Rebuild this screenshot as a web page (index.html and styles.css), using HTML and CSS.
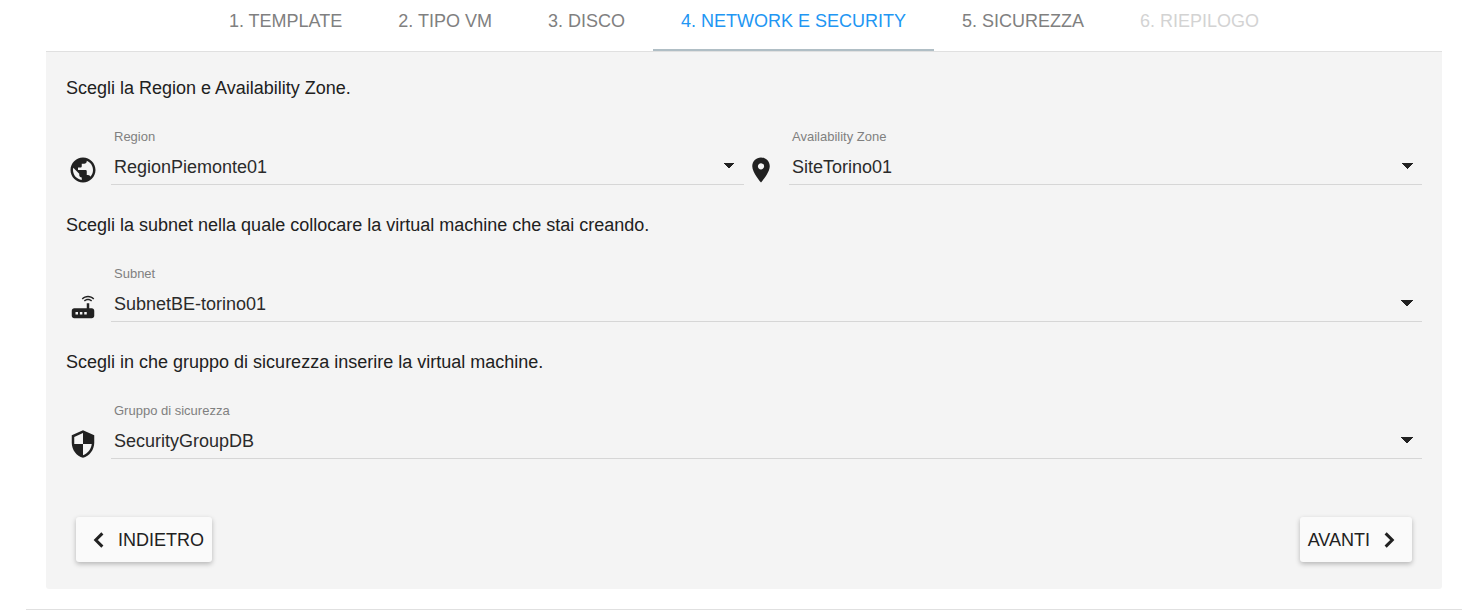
FILE: index.html
```
<!DOCTYPE html>
<html lang="it">
<head>
<meta charset="utf-8">
<meta name="viewport" content="width=device-width, initial-scale=1">
<title>Creazione virtual machine</title>
<link rel="stylesheet" href="styles.css">
</head>
<body>
<main class="wizard">
  <nav class="tabs" aria-label="Passi">
    <button class="tab" type="button">1. TEMPLATE</button>
    <button class="tab" type="button">2. TIPO VM</button>
    <button class="tab" type="button">3. DISCO</button>
    <button class="tab tab-active" type="button" aria-current="step">4. NETWORK E SECURITY</button>
    <button class="tab" type="button">5. SICUREZZA</button>
    <button class="tab" type="button" disabled>6. RIEPILOGO</button>
  </nav>
  <form class="panel">
    <p class="prompt">Scegli la Region e Availability Zone.</p>
    <div class="row">
      <div class="field">
        <svg class="icon" viewBox="0 0 24 24" aria-hidden="true"><path d="M12 2C6.480 2 2 6.480 2 12s4.480 10 10 10 10-4.480 10-10S17.520 2 12 2zm-1 17.930c-3.950-.490-7-3.850-7-7.930 0-.620.080-1.210.210-1.790L9 15v1c0 1.100.900 2 2 2v1.930zm6.900-2.540c-.260-.810-1-1.390-1.900-1.390h-1v-3c0-.550-.450-1-1-1H8v-2h2c.550 0 1-.450 1-1V7h2c1.100 0 2-.900 2-2v-.410c2.930 1.190 5 4.060 5 7.410 0 2.080-.800 3.970-2.100 5.390z"/></svg>
        <div class="control">
          <label class="label" for="region">Region</label>
          <select class="select" id="region"><option>RegionPiemonte01</option></select>
        </div>
      </div>
      <div class="field">
        <svg class="icon" viewBox="0 0 24 24" aria-hidden="true"><path d="M12 2C8.130 2 5 5.130 5 9c0 5.250 7 13 7 13s7-7.750 7-13c0-3.870-3.130-7-7-7zm0 9.500c-1.380 0-2.500-1.120-2.500-2.500s1.120-2.500 2.500-2.500 2.500 1.120 2.500 2.500-1.120 2.500-2.500 2.500z"/></svg>
        <div class="control">
          <label class="label" for="zone">Availability Zone</label>
          <select class="select" id="zone"><option>SiteTorino01</option></select>
        </div>
      </div>
    </div>
    <p class="prompt">Scegli la subnet nella quale collocare la virtual machine che stai creando.</p>
    <div class="row">
      <div class="field">
        <svg class="icon" viewBox="0 0 24 24" aria-hidden="true"><path d="M20.200 5.900l.800-.800C19.600 3.700 17.800 3 16 3s-3.600.700-5 2.100l.800.800C13 4.800 14.500 4.200 16 4.200s3 .600 4.200 1.700zm-.900.800c-.900-.900-2.100-1.400-3.300-1.400s-2.400.500-3.300 1.400l.800.800c.700-.700 1.600-1 2.500-1 .900 0 1.800.300 2.500 1l.800-.800zM19 13h-2V9h-2v4H5c-1.100 0-2 .900-2 2v4c0 1.100.900 2 2 2h14c1.100 0 2-.900 2-2v-4c0-1.100-.900-2-2-2zM8 18H6v-2h2v2zm3.500 0h-2v-2h2v2zm3.500 0h-2v-2h2v2z"/></svg>
        <div class="control">
          <label class="label" for="subnet">Subnet</label>
          <select class="select" id="subnet"><option>SubnetBE-torino01</option></select>
        </div>
      </div>
    </div>
    <p class="prompt">Scegli in che gruppo di sicurezza inserire la virtual machine.</p>
    <div class="row">
      <div class="field">
        <svg class="icon" viewBox="0 0 24 24" aria-hidden="true"><path d="M12 1L3 5v6c0 5.550 3.840 10.740 9 12 5.160-1.260 9-6.450 9-12V5l-9-4zm0 10.990h7c-.530 4.120-3.280 7.790-7 8.940V12H5V6.300l7-3.110v8.800z"/></svg>
        <div class="control">
          <label class="label" for="group">Gruppo di sicurezza</label>
          <select class="select" id="group"><option>SecurityGroupDB</option></select>
        </div>
      </div>
    </div>
    <div class="actions">
      <button class="button" type="button">
        <svg class="icon chevron" viewBox="0 0 24 24" aria-hidden="true"><path d="M14.700 6.700L9.400 12l5.300 5.300"/></svg>
        INDIETRO
      </button>
      <button class="button" type="button">
        AVANTI
        <svg class="icon chevron" viewBox="0 0 24 24" aria-hidden="true"><path d="M9.300 6.700l5.300 5.300-5.300 5.300"/></svg>
      </button>
    </div>
  </form>
</main>
</body>
</html>
```
FILE: styles.css
```
* {
  box-sizing: border-box;
}

body {
  margin: 0;
  background: #fff;
  color: #212121;
  font: 18px/24px "Liberation Sans", Arial, sans-serif;
}

.wizard {
  margin: 0 10px 0 26px;
  padding: 0 20px 20px;
  border-bottom: 1px solid #e0e0e0;
}

.tabs {
  display: flex;
  justify-content: center;
  border-bottom: 1px solid #e0e0e0;
}

.tab {
  padding: 9px 28px 16px;
  border: 0;
  border-bottom: 2px solid transparent;
  background: none;
  color: #808080;
  font: inherit;
  white-space: nowrap;
}

.tab-active {
  border-bottom-color: #b0bec5;
  color: #2196f3;
}

.tab:disabled {
  color: #d3d3d3;
}

.panel {
  padding: 24px 20px 27px;
  border-radius: 0 0 3px 3px;
  background: #f4f4f4;
}

.prompt {
  margin: 0;
}

.row {
  display: flex;
  padding: 28px 0;
}

.field {
  display: flex;
  flex: 1;
  align-items: flex-end;
  gap: 13px;
  padding-left: 2px;
}

.icon {
  flex: none;
  width: 30px;
  height: 30px;
  fill: #212121;
}

.chevron {
  fill: none;
  stroke: #212121;
  stroke-width: 2.4;
}

.control {
  display: flex;
  flex: 1;
  flex-direction: column;
  border-bottom: 1px solid #d6d6d6;
}

.label {
  padding-left: 3px;
  color: #808080;
  font-size: 13px;
  line-height: 18px;
}

.select {
  appearance: none;
  width: 100%;
  height: 38px;
  margin: 0;
  padding: 4px 3px 0;
  border: 0;
  border-radius: 0;
  background: conic-gradient(from -45deg at 50% 100%, #212121 90deg, transparent 0) right 9px top 17px / 12px 6px no-repeat;
  color: #2b2b2b;
  font: inherit;
}

.actions {
  display: flex;
  justify-content: space-between;
  padding: 30px 10px 0;
}

.button {
  display: flex;
  align-items: center;
  gap: 4px;
  height: 45px;
  padding: 0 8px;
  border: 0;
  border-radius: 3px;
  background: #fafafa;
  box-shadow: 0 2px 5px rgba(0, 0, 0, 0.26);
  color: #212121;
  font: inherit;
}
```
